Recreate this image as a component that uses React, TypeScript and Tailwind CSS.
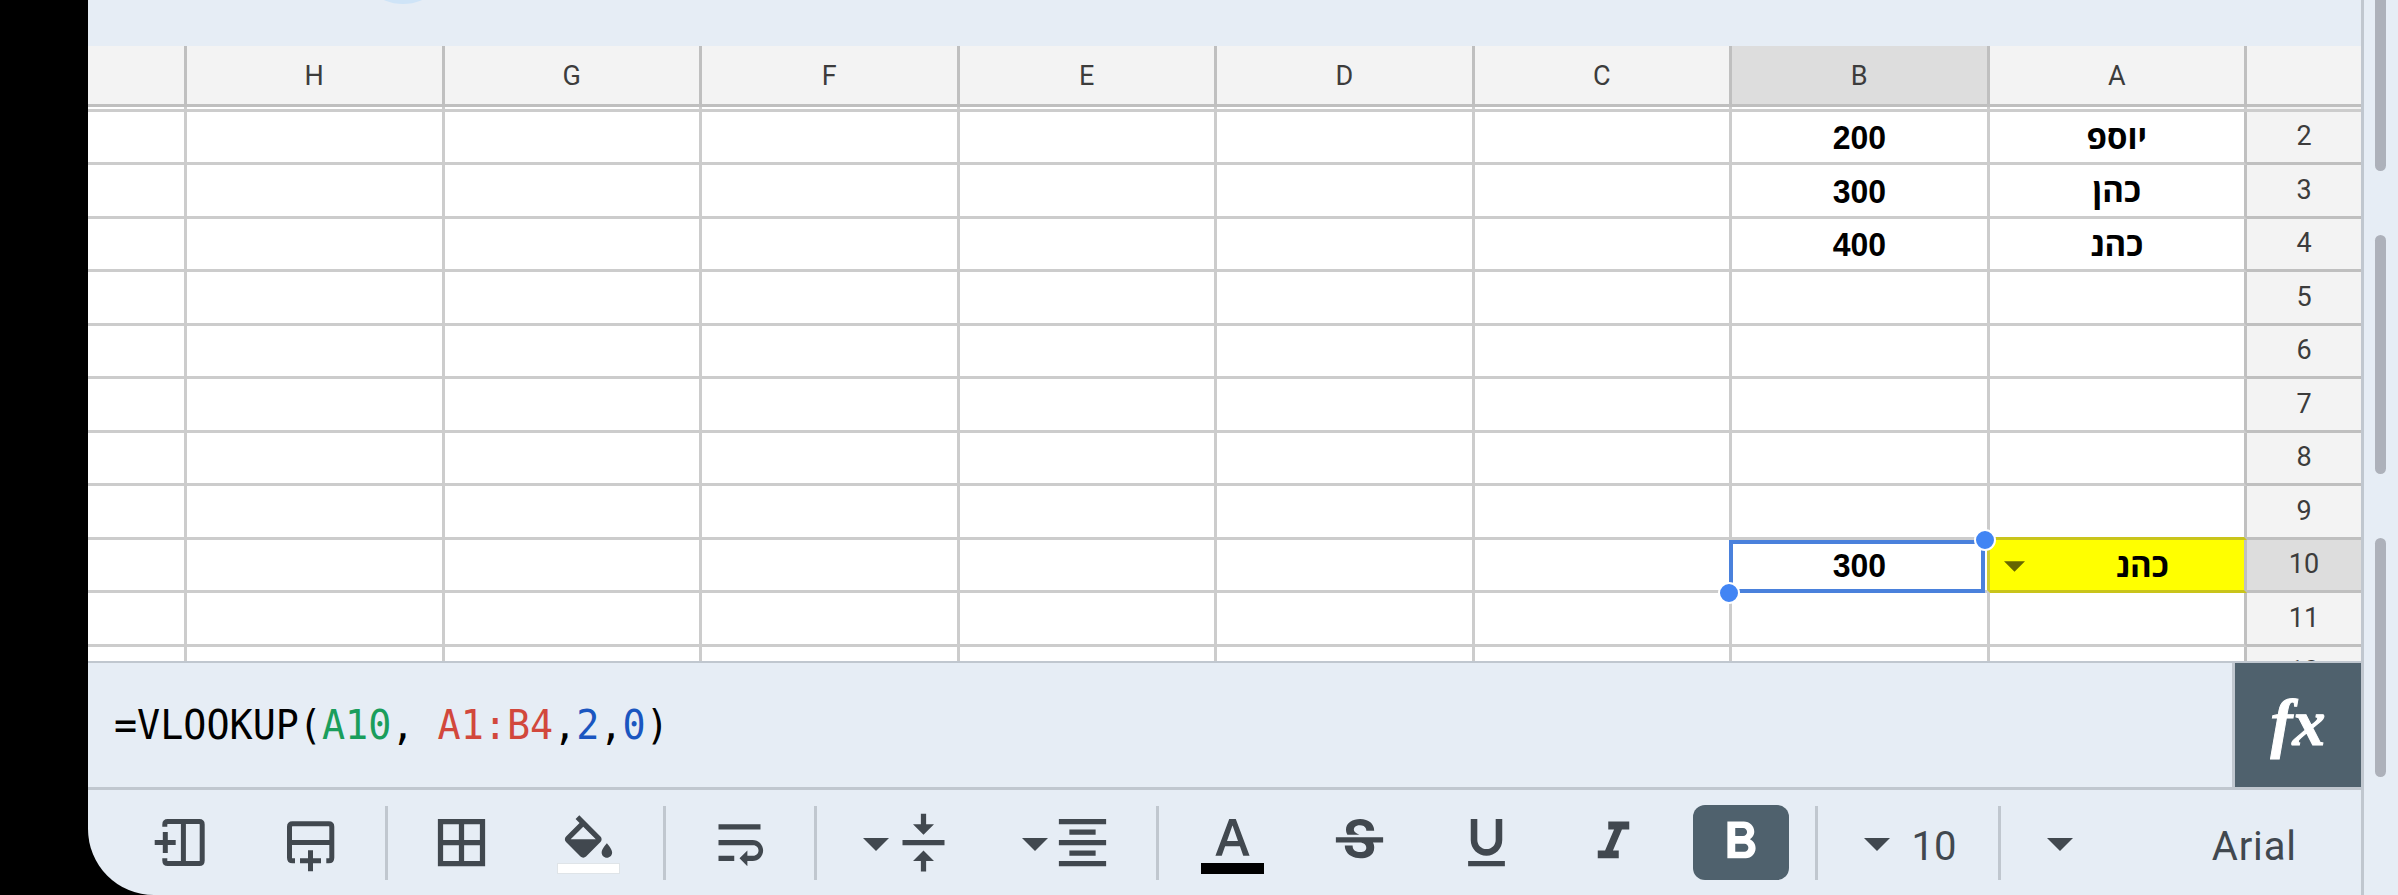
import type { ReactNode } from "react";
import {
  MdFormatBold,
  MdFormatColorText,
  MdFormatItalic,
  MdFormatUnderlined,
  MdStrikethroughS,
} from "react-icons/md";

type Row = {
  num: number;
  a?: string;
  b?: string;
};

const columns = ["", "H", "G", "F", "E", "D", "C", "B", "A"];

const rows: Row[] = [
  { num: 2, a: "יוספ", b: "200" },
  { num: 3, a: "כהן", b: "300" },
  { num: 4, a: "כהנ", b: "400" },
  { num: 5 },
  { num: 6 },
  { num: 7 },
  { num: 8 },
  { num: 9 },
  { num: 10, a: "כהנ", b: "300" },
  { num: 11 },
  { num: 12 },
];

const ACTIVE_COLUMN = "B";
const ACTIVE_ROW = 10;

const columnWidth = (column: string) => (column === "" ? "w-[99px]" : "w-[257.5px]");

const ColumnHeaders = () => (
  <div className="flex h-[61px] shrink-0 border-b-3 border-[#bfbfbf] bg-[#f3f3f3]">
    {columns.map((column) => (
      <div
        key={column}
        className={`${columnWidth(column)} ${
          column === ACTIVE_COLUMN ? "bg-[#dddddd]" : ""
        } flex shrink-0 items-center justify-center border-r-3 border-[#bfbfbf] pt-[2px] text-[27px] text-[#3c3c3c]`}
      >
        {column}
      </div>
    ))}
  </div>
);

// thin strip left by the frozen header row
const FrozenStrip = () => (
  <div className="flex h-[4.7px] shrink-0 border-b-3 border-[#cccccc] bg-white">
    {columns.map((column) => (
      <div key={column} className={`${columnWidth(column)} shrink-0 border-r-3 border-[#cccccc]`} />
    ))}
    <div className="flex-1 bg-[#f3f3f3]" />
  </div>
);

const Selection = () => (
  <div className="absolute top-0 -left-[3px] z-10 h-[53px] w-[256px] border-4 border-[#4a81dc]">
    <span className="absolute -top-[15px] -right-[15px] size-[22px] rounded-full border-[2.5px] border-white bg-[#4285f4]" />
    <span className="absolute -bottom-[15px] -left-[15px] size-[22px] rounded-full border-[2.5px] border-white bg-[#4285f4]" />
  </div>
);

const Cell = ({ row, column }: { row: Row; column: string }) => {
  const active = row.num === ACTIVE_ROW;
  const base = `${columnWidth(column)} relative flex shrink-0 items-center justify-center border-r-3 border-b-3`;

  if (column === "A") {
    return (
      <div
        className={`${base} ${
          active
            ? "border-r-[#c0c0c0] border-b-[#c9c41a] bg-[#ffff00]"
            : row.num === ACTIVE_ROW - 1
              ? "border-r-[#c0c0c0] border-b-[#c9c41a]"
              : "border-r-[#c0c0c0] border-b-[#cccccc]"
        }`}
      >
        {active && (
          <svg className="absolute top-[21px] left-[14px] h-[11px] w-[21px]" viewBox="0 0 20 10" fill="#666600">
            <path d="M0 0h20L10 10z" />
          </svg>
        )}
        <span
          dir="rtl"
          className={`${active ? "pl-[51px]" : ""} pb-[1px] font-['Open_Sans','Liberation_Sans',sans-serif] text-[33px] leading-none font-bold text-black`}
        >
          {row.a}
        </span>
      </div>
    );
  }

  if (column === "B") {
    return (
      <div className={`${base} ${active ? "border-r-[#d0cc30]" : "border-r-[#cccccc]"} border-b-[#cccccc]`}>
        {active && <Selection />}
        <span className="scale-x-[0.94] pt-[1px] font-['Liberation_Sans',Arial,sans-serif] text-[34px] leading-none font-bold text-black">
          {row.b}
        </span>
      </div>
    );
  }

  return <div className={`${base} border-[#cccccc]`} />;
};

const Sheet = () => (
  <section className="flex h-[615px] shrink-0 flex-col overflow-hidden bg-white">
    <ColumnHeaders />
    <FrozenStrip />
    {rows.map((row) => (
      <div key={row.num} className="flex h-[53.5px] shrink-0">
        {columns.map((column) => (
          <Cell key={column} row={row} column={column} />
        ))}
        <div
          className={`${
            row.num === ACTIVE_ROW ? "bg-[#dddddd]" : "bg-[#f3f3f3]"
          } flex flex-1 items-center justify-center border-b-3 border-[#bfbfbf] text-[27px] leading-none text-[#3c3c3c]`}
        >
          {row.num}
        </div>
      </div>
    ))}
  </section>
);

const FormulaBar = () => (
  <section className="flex h-[129px] shrink-0 border-t-2 border-b-3 border-[#c0c7cf]">
    <p className="flex-1 origin-left scale-x-[0.96] pt-[36px] pl-[27px] font-['DejaVu_Sans_Mono',monospace] text-[40px] leading-[52px] whitespace-pre text-black">
      =VLOOKUP(<span className="text-[#1a9e5c]">A10</span>, <span className="text-[#d2483c]">A1:B4</span>,
      <span className="text-[#1a56c0]">2</span>,<span className="text-[#1a56c0]">0</span>)
    </p>
    <div className="flex w-[129px] items-center justify-center border-l-3 border-[#c0c7cf] bg-[#4f616d] pb-[5px] font-['Liberation_Serif',serif] text-[66px] leading-none font-bold text-white italic [-webkit-text-stroke:1px_white]">
      fx
    </div>
  </section>
);

const Icon = ({ className, children }: { className: string; children: ReactNode }) => (
  <svg className={`${className} size-[63px] shrink-0`} viewBox="0 0 24 24" fill="currentColor">
    {children}
  </svg>
);

const Caret = ({ className }: { className: string }) => (
  <svg className={`${className} mt-[3px] h-[13px] w-[26px] shrink-0`} viewBox="0 0 26 13" fill="currentColor">
    <path d="M0 0h26L13 13z" />
  </svg>
);

const Divider = ({ className }: { className: string }) => (
  <div className={`${className} h-[74px] w-[3px] shrink-0 bg-[#c0c7cf]`} />
);

const Toolbar = () => (
  <section className="flex h-[105px] shrink-0 items-center text-[#41484f]">
    <svg
      className="ml-[60px] size-[63px] shrink-0"
      viewBox="0 0 63 63"
      fill="none"
      stroke="currentColor"
      strokeWidth="5"
    >
      <path d="M16.8 15.8V13.5q0-3 3-3H51.2q3 0 3 3v36q0 3-3 3H19.8q-3 0-3-3v-2.2M35.4 10.5v42M6.7 31.5h21M17.3 21v21" />
    </svg>
    <svg
      className="ml-[68px] size-[63px] shrink-0"
      viewBox="0 0 63 63"
      fill="none"
      stroke="currentColor"
      strokeWidth="5"
    >
      <path d="M16 49.8h-2.5q-3 0-3-3V15.8q0-3 3-3h36.3q3 0 3 3v31q0 3-3 3h-2.5M10.5 31.5h42.3M21 49.7h21M31.5 39.2v21" />
    </svg>
    <Divider className="ml-[43px]" />
    <Icon className="ml-[42px]">
      <path d="M3 3v18h18V3H3zm8 16H5v-6h6v6zm0-8H5V5h6v6zm8 8h-6v-6h6v6zm0-8h-6V5h6v6z" />
    </Icon>
    <div className="relative ml-[64px] size-[63px] shrink-0">
      <Icon className="mt-[2px]">
        <path d="M16.56 8.94 8.49.87 7.08 2.28l1.51 1.51-5.15 5.15c-.59.59-.59 1.54 0 2.12l5.5 5.5c.29.29.68.44 1.06.44s.77-.15 1.06-.44l5.5-5.5c.59-.58.59-1.53 0-2.12zM5.21 10 10 5.21 14.79 10H5.21zM19 11.5s-2 2.17-2 3.5c0 1.1.9 2 2 2s2-.9 2-2c0-1.33-2-3.5-2-3.5z" />
      </Icon>
      <span className="absolute top-[52px] left-0 h-[11px] w-full border border-[#dfe4e8] bg-white" />
    </div>
    <Divider className="ml-[43px]" />
    <Icon className="ml-[41.5px]">
      <path d="M4 19h6v-2H4v2zM20 5H4v2h16V5zm-3 6H4v2h13.25c1.1 0 2 .9 2 2s-.9 2-2 2H15v-2l-3 3 3 3v-2h2c2.21 0 4-1.79 4-4s-1.79-4-4-4z" />
    </Icon>
    <Divider className="ml-[43.5px]" />
    <Caret className="ml-[46px]" />
    <Icon className="ml-[3px]">
      <path d="M8 19h3v4h2v-4h3l-4-4-4 4zm8-14h-3V1h-2v4H8l4 4 4-4zM4 11v2h16v-2H4z" />
    </Icon>
    <Caret className="ml-[66.7px]" />
    <Icon className="ml-[3px]">
      <path d="M7 15v2h10v-2H7zm-4 6h18v-2H3v2zm0-8h18v-2H3v2zm4-6v2h10V7H7zM3 3v2h18V3H3z" />
    </Icon>
    <Divider className="ml-[42.3px]" />
    <div className="relative ml-[42px] size-[63px] shrink-0">
      <MdFormatColorText className="size-[63px]" />
      <span className="absolute top-[52px] left-0 h-[11px] w-full bg-black" />
    </div>
    <MdStrikethroughS className="ml-[64.3px] size-[63px] shrink-0" />
    <MdFormatUnderlined className="ml-[63.4px] size-[63px] shrink-0" />
    <MdFormatItalic className="ml-[64px] size-[63px] shrink-0" />
    <div className="ml-[48.4px] flex h-[75px] w-[96.3px] shrink-0 items-center justify-center rounded-xl bg-[#4f616d] pr-[2px] text-white">
      <MdFormatBold className="size-[63px]" />
    </div>
    <Divider className="ml-[25.7px]" />
    <Caret className="ml-[45.5px]" />
    <span className="ml-[22px] w-[60px] pt-[8px] text-[40px] leading-none">10</span>
    <Divider className="ml-[26px]" />
    <Caret className="ml-[46px]" />
    <span className="ml-auto pt-[8px] pr-[64px] text-[40px] leading-none tracking-[0.9px]">Arial</span>
  </section>
);

const Scrollbars = () => (
  <aside className="flex flex-1 flex-col items-start pl-[10.5px]">
    <div className="h-[171px] w-[11.5px] rounded-b-md bg-[#adb1ba]" />
    <div className="mt-[64px] h-[239px] w-[11.5px] rounded-md bg-[#adb1ba]" />
    <div className="mt-[64px] h-[239px] w-[11.5px] rounded-md bg-[#adb1ba]" />
  </aside>
);

const App = () => {
  return (
    <div className="h-[895px] w-[2398px] overflow-hidden bg-black pl-[88px] font-[Roboto,sans-serif]">
      <div className="flex h-full overflow-hidden rounded-bl-[66px] bg-[#e6edf5]">
        <main className="flex w-[2276px] shrink-0 flex-col border-r-3 border-[#c0c7cf]">
          <header className="relative h-[46px] shrink-0 overflow-hidden">
            <span className="absolute -top-[90px] left-[268px] size-[94px] rounded-full bg-[#cfe4f7]" />
          </header>
          <Sheet />
          <FormulaBar />
          <Toolbar />
        </main>
        <Scrollbars />
      </div>
    </div>
  );
};

export default App;
